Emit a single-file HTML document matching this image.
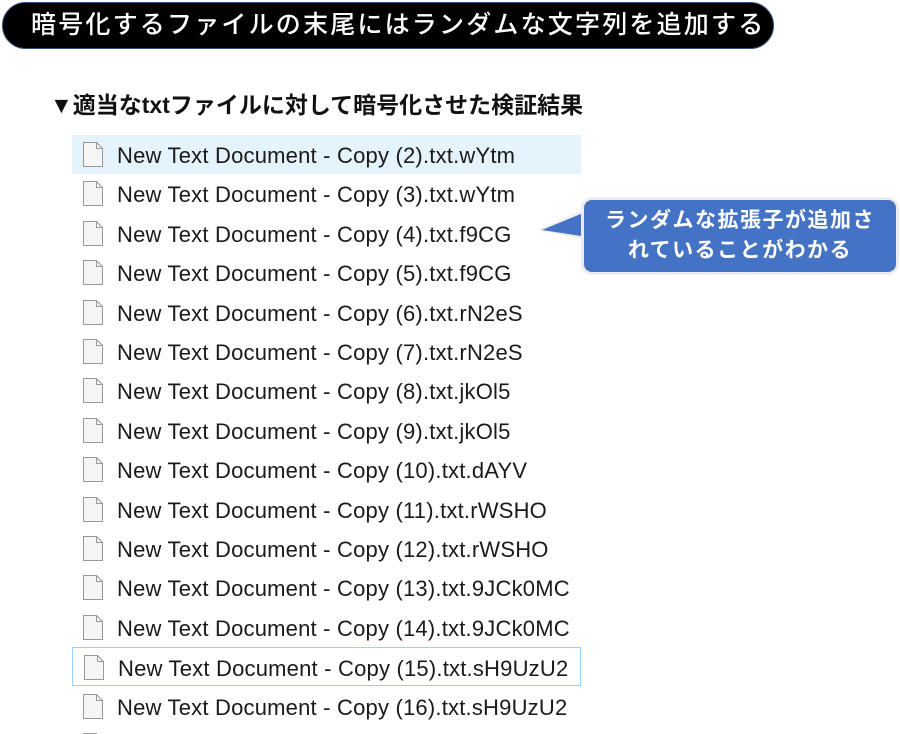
<!DOCTYPE html>
<html><head><meta charset="utf-8"><style>
html,body{margin:0;width:900px;height:734px;overflow:hidden}
body{background:#fff;position:relative;font-family:"Liberation Sans","Noto Sans CJK JP",sans-serif}
.hdr{position:absolute;left:2px;top:2px;width:772px;height:47px;background:#000;border-radius:24px;border:1px solid #2f4f7f;box-sizing:border-box;color:#fff;font-size:25px;line-height:44px;padding-left:28px;letter-spacing:2.2px;font-weight:500}
.sub{position:absolute;left:50px;top:86px;font-size:23px;font-weight:bold;color:#111}
.row{position:absolute;left:72px;width:509px;height:39px;box-sizing:border-box}
.row span{position:absolute;left:45px;top:8px;font-size:22px;letter-spacing:0.2px;color:#1a1a1a;white-space:nowrap}
.row svg{position:absolute;left:10px;top:6px}
.sel{background:#e5f3fd}
.foc{border:1px solid #99d1ff}
.call{position:absolute;left:584px;top:200px;width:312px;height:72px;background:#4472c4;border-radius:8px;box-shadow:0 0 0 3px #ececec;color:#fff;font-weight:bold;font-size:21px;text-align:center;line-height:30px;padding-top:6px;box-sizing:border-box;letter-spacing:1.5px}
</style></head><body>
<div class="hdr">暗号化するファイルの末尾にはランダムな文字列を追加する</div>
<div class="sub">▼適当なtxtファイルに対して暗号化させた検証結果</div>
<svg style="position:absolute;left:530px;top:200px" width="60" height="50"><polygon points="8,30 58,8 58,40" fill="#ececec"/><polygon points="12,30 58,11 58,37" fill="#4472c4"/></svg>
<div class="call">ランダムな拡張子が追加さ<br>れていることがわかる</div>
<div id="list"></div>
<script>
var n=["(2).txt.wYtm","(3).txt.wYtm","(4).txt.f9CG","(5).txt.f9CG","(6).txt.rN2eS","(7).txt.rN2eS","(8).txt.jkOl5","(9).txt.jkOl5","(10).txt.dAYV","(11).txt.rWSHO","(12).txt.rWSHO","(13).txt.9JCk0MC","(14).txt.9JCk0MC","(15).txt.sH9UzU2","(16).txt.sH9UzU2",""];
var ic='<svg width="22" height="27"><path d="M1.5 1.5H14.5L20.5 7.5V25.5H1.5Z" fill="#f5f5f5" stroke="#999"/><path d="M14.5 1.5V7.5H20.5" fill="none" stroke="#999"/></svg>';
var h="";for(var i=0;i<n.length;i++){var t=135+i*39.4;h+='<div class="row'+(i==0?' sel':'')+(i==13?' foc':'')+'" style="top:'+t+'px">'+ic+(n[i]?'<span>New Text Document - Copy '+n[i]+'</span>':'')+'</div>';}
document.getElementById("list").innerHTML=h;
</script>
</body></html>
